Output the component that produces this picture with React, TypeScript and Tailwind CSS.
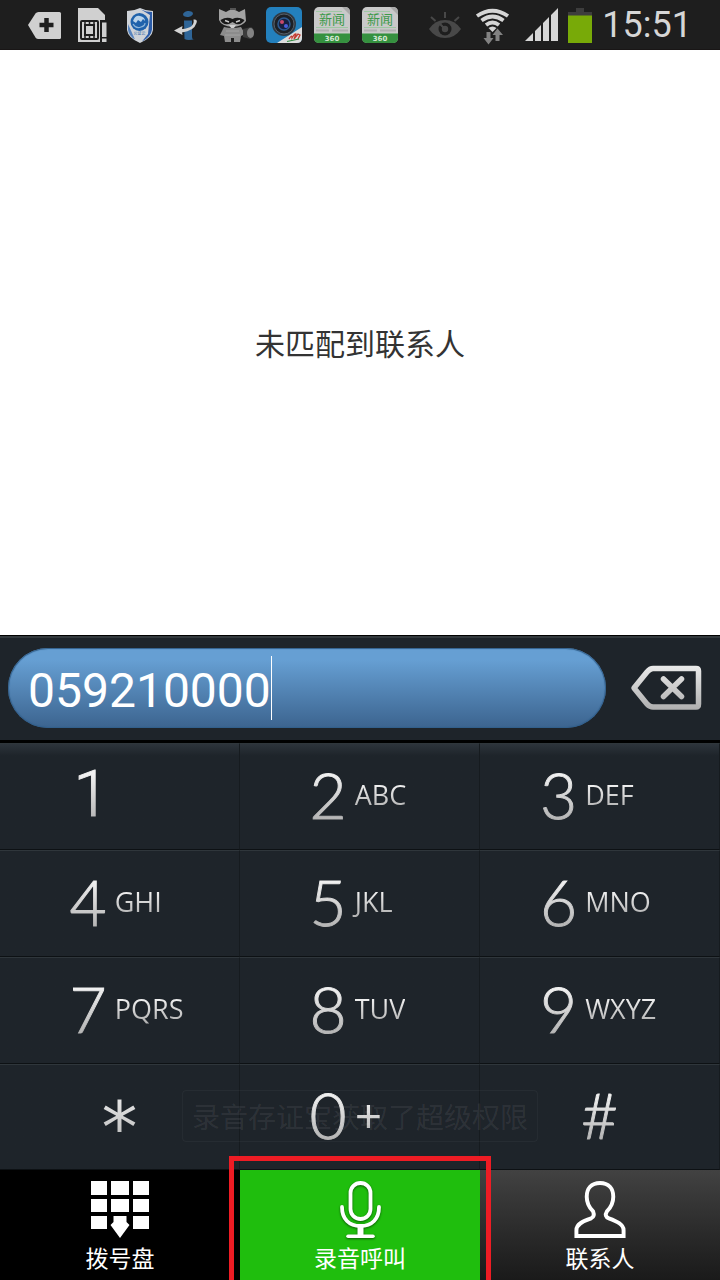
import type { FC, ReactNode } from 'react'
import { useState } from 'react'
import clsx from 'clsx'

interface DialKey {
  digit: string
  letters?: string
}

const KEYS: DialKey[] = [
  { digit: '1' },
  { digit: '2', letters: 'ABC' },
  { digit: '3', letters: 'DEF' },
  { digit: '4', letters: 'GHI' },
  { digit: '5', letters: 'JKL' },
  { digit: '6', letters: 'MNO' },
  { digit: '7', letters: 'PQRS' },
  { digit: '8', letters: 'TUV' },
  { digit: '9', letters: 'WXYZ' },
  { digit: '*' },
  { digit: '0', letters: '+' },
  { digit: '#' },
]

const NotifyIcon: FC<{ children: ReactNode }> = ({ children }) => (
  <svg className="w-12 h-[50px] shrink-0" viewBox="0 0 48 50" fill="none" aria-hidden="true">
    {children}
  </svg>
)

const NewsIcon: FC = () => (
  <NotifyIcon>
    <rect x="6" y="7" width="36" height="36" rx="5" fill="#c9c9c9" />
    <path d="M8 11.500H34M8 27.500H40" stroke="#9fc7a4" strokeWidth="1" />
    <path d="M34 7h3q5 0 5 5v3z" fill="#aaa" />
    <path d="M8 30.500H21M24 30.500H40" stroke="#b0b0b0" strokeWidth="2" />
    <path d="M6 33.500H42V38q0 5-5 5H11q-5 0-5-5z" fill="#35913f" />
    <text x="24" y="24" textAnchor="middle" fontSize="13" fill="#3c9a4a" fontFamily="'Noto Sans CJK SC', sans-serif">新闻</text>
    <text x="24" y="41" textAnchor="middle" fontSize="7" fontWeight="700" fill="#d5e8d6" fontFamily="'DejaVu Sans', sans-serif">360</text>
  </NotifyIcon>
)

const StatusBar: FC = () => (
  <header className="flex items-center h-[50px] pl-5 pr-7 bg-[#1e1e1e] border-b border-[#191616] overflow-hidden">
    <NotifyIcon>
      <path d="M8 25 15.500 13.500Q16.500 12 18.500 12H39.500Q41 12 41 13.500V37.500Q41 39 39.500 39H18.500Q16.500 39 15.500 37.500Z" fill="#d0d0d0" />
      <path d="M26.500 18V32M19.500 25H33.500" stroke="#1e1e1e" strokeWidth="4.500" />
    </NotifyIcon>
    <NotifyIcon>
      <path d="M10 8H30L37 15V42H10Z" fill="#d0d0d0" />
      <path d="M32 20H40V43H32Z" fill="#1e1e1e" />
      <path d="M34 22.500H38.500V37H34ZM34 38.500H38.500V42H34Z" fill="#d0d0d0" />
      <rect x="13" y="21" width="17" height="18" rx="1" stroke="#1e1e1e" strokeWidth="2" />
      <rect x="17" y="25" width="9" height="10" stroke="#1e1e1e" strokeWidth="2" />
      <path d="M17 21V25M21.500 21V25M26 21V25M17 35V39M21.500 35V39M26 35V39" stroke="#1e1e1e" strokeWidth="1.500" />
    </NotifyIcon>
    <NotifyIcon>
      <path d="M24 8Q30 11 37 11V30Q36 38 24 43Q12 38 11 30V11Q18 11 24 8Z" fill="#cfd3d8" />
      <path d="M25 9.500Q30 12 36 12V29.500Q35 37 26 41.500L32 34 34 15Z" fill="#2b5ca8" />
      <path d="M12 24V30Q13 36 19 39.500Z" fill="#5783bd" />
      <circle cx="23.500" cy="22" r="9" fill="#1f62ab" />
      <path d="M17 21q2-6 7-5 5 1 5 5l-2-2-2 3-3-2-2 3z" fill="#b9d3ea" />
      <path d="M17 24q3 5 8 3 4-1 4-4" stroke="#8fb6da" strokeWidth="1.200" />
      <text x="23.500" y="35" textAnchor="middle" fontSize="4" fill="#245ea6" fontFamily="'Noto Sans CJK SC', sans-serif">公证云</text>
    </NotifyIcon>
    <NotifyIcon>
      <ellipse cx="24" cy="14" rx="5" ry="3" fill="#2f6597" transform="rotate(-8 24 14)" />
      <path d="M20 20.500H28V37Q28 40 31 39Q24 41 20.500 39Z" fill="#2f6597" />
      <path d="M10 30.500 18.500 26 18 29Q31 28 29.500 19.500 34 19 32.500 23 30 31 18 32.500L18.500 35Z" fill="#d4d4d4" />
    </NotifyIcon>
    <NotifyIcon>
      <path d="M7 9 14 12Q20 7 27 12L33 9 34 21Q31 26 21 27 9 26 7 20Z" fill="#a2a2a2" />
      <path d="M8.500 20Q15 16 20.500 19 26 16 32.500 20 30 25 24 24L20.500 22 17 24Q10 25 8.500 20Z" fill="#191919" />
      <path d="M13 20.500 17 22M28 20.500 24 22" stroke="#ccc" strokeWidth="1.400" />
      <path d="M17 25H24L22 28H19Z" fill="#cfcfcf" />
      <path d="M12 27Q20 29 29 27L33 34 29 36 28 42H22V38H19V42H13L12 36 8 35Z" fill="#8c8c8c" />
      <path d="M14 31H27M13 35H28" stroke="#aaa" strokeWidth=".8" />
      <path d="M31 29 39 27Q42 28 42 33 42 38 38 39L31 37Z" fill="#3c3c3c" />
      <ellipse cx="38.500" cy="33" rx="3.500" ry="5" fill="#828282" />
      <path d="M18 9h6" stroke="#555" strokeWidth="2" />
    </NotifyIcon>
    <NotifyIcon>
      <rect x="6" y="7" width="36" height="36" rx="5" fill="#2380bd" />
      <path d="M17 43 42 27V38Q42 43 37 43Z" fill="#ddd" />
      <circle cx="24" cy="24" r="12" fill="#303a44" />
      <circle cx="24" cy="24" r="10" fill="#1c2026" stroke="#555f69" strokeWidth="1" />
      <circle cx="24" cy="24" r="6" fill="#172042" stroke="#2d5a91" strokeWidth="1.500" />
      <circle cx="22" cy="22" r="2" fill="#c8496c" />
      <circle cx="26" cy="26" r="2" fill="#4860df" />
      <path d="M29 39q3-5 3-1 3-5 4-4l-2 5 4-5 2 1-2 4" stroke="#c43b31" strokeWidth="1.300" />
      <path d="M27 41.500 39 39" stroke="#328c42" strokeWidth="1.200" />
    </NotifyIcon>
    <NewsIcon />
    <NewsIcon />
    <div className="flex items-center ml-auto">
      <svg className="w-8 h-[50px] mr-[14px]" viewBox="0 0 32 50" fill="none" aria-hidden="true">
        <path d="M0 29Q6 20 16 20T32 29Q26 38 16 38T0 29Z" fill="#484848" />
        <circle cx="16" cy="29" r="6.500" fill="#1e1e1e" />
        <circle cx="16" cy="29" r="3.200" fill="#484848" />
        <path d="M16 29 11 24M16 12V18M2 17 6.500 21M30 17 25.500 21" stroke="#484848" strokeWidth="2" />
      </svg>
      <svg className="w-9 h-[50px] mr-[14px]" viewBox="0 0 36 50" fill="none" aria-hidden="true">
        <path d="M2 16Q17.500 5.500 33 16M6.500 20.500Q17.500 12.500 28.500 20.500M11 25Q17.500 20 24 25" stroke="#d6d6d6" strokeWidth="3.800" />
        <path d="M13.500 28Q17.500 25 21.500 28L17.500 32Z" fill="#d6d6d6" />
        <path d="M11.500 32H15.500V38H18.500L13.500 44.500 8.500 38H11.500Z" fill="#828282" />
        <path d="M22.500 28.500 28 35H24.500V41H20.500V35H17.500Z" fill="#828282" />
      </svg>
      <svg className="w-[33px] h-[50px] mr-[10px]" viewBox="0 0 33 50" fill="#d6d6d6" aria-hidden="true">
        <path d="M0 41 8 33V41ZM10 31 16 25V41H10ZM18 23 24 17V41H18ZM26 15 33 8V41H26Z" />
      </svg>
      <svg className="w-6 h-[50px] mr-[10px]" viewBox="0 0 24 50" aria-hidden="true">
        <path d="M8 8H16V12H24V16H0V12H8Z" fill="#3d3d3d" />
        <path d="M0 15.500H24V43H0Z" fill="#78aa08" />
      </svg>
      <time className="font-['Roboto',sans-serif] text-4xl leading-[50px] text-[#d6d6d6]">15:51</time>
    </div>
  </header>
)

const DeleteIcon: FC = () => (
  <svg className="w-[72px] h-[46px]" viewBox="0 0 72 46" fill="none" aria-hidden="true">
    <defs>
      <linearGradient id="metal" gradientUnits="userSpaceOnUse" x1="0" y1="0" x2="0" y2="46">
        <stop stopColor="#ebebeb" />
        <stop offset="1" stopColor="#adadad" />
      </linearGradient>
    </defs>
    <g stroke="url(#metal)" strokeWidth="5.500" strokeLinecap="round" strokeLinejoin="round">
      <path d="M4 23 17 7Q20 3.500 23 3.500H66Q68.500 3.500 68.500 6V39Q68.500 42 66 42H23Q20 42 17 39Z" />
      <path d="M33.500 14 51.500 31.500M51.500 14 33.500 31.500" />
    </g>
  </svg>
)

const KeypadIcon: FC = () => (
  <svg className="w-[58px] h-[57px]" viewBox="0 0 58 57" fill="#fff" aria-hidden="true">
    <path d="M0 0H16V14H0ZM20 0H38V14H20ZM42 0H58V14H42ZM0 18H16V31H0ZM20 18H38V31H20ZM42 18H58V31H42ZM0 35H16V48H0ZM42 35H58V48H42Z" />
    <path d="M22.500 35H35.500V41L38.500 44 29 57 19.500 44 22.500 41Z" />
  </svg>
)

const MicIcon: FC = () => (
  <svg className="w-[41px] h-[57px] drop-shadow-[0_1px_1px_#0a5a04]" viewBox="0 0 41 57" fill="none" stroke="#fff" strokeWidth="3.800" aria-hidden="true">
    <rect x="10.500" y="2" width="20" height="36" rx="10" />
    <path d="M2 26C2 38 9 45 20.500 45S39 38 39 26" strokeLinecap="round" />
    <path d="M20.500 45V55" strokeWidth="6" />
    <path d="M8 55.200H33" strokeWidth="3.500" strokeLinecap="round" />
  </svg>
)

const PersonIcon: FC = () => (
  <svg className="w-[52px] h-[57px]" viewBox="0 0 52 58" fill="none" stroke="#fff" strokeWidth="4" aria-hidden="true">
    <path d="M26 2C17 2 12.500 8 12.500 16 12.500 24 16 28 19 31Q21 36 17 38C8 41 2 44 2 50V56H50V50C50 44 43 41 35 38Q30 36 33 31C36 28 39.500 24 39.500 16 39.500 8 35 2 26 2Z" />
  </svg>
)

interface KeyProps extends DialKey {
  column: number
  onPress: (digit: string) => void
}

const KeyButton: FC<KeyProps> = ({ digit, letters, column, onPress }) => {
  const isSymbol = digit === '*' || digit === '#'
  const metal = 'bg-linear-to-b from-[#f2f2f2] from-20% to-[#b4b4b4] to-85% bg-clip-text text-transparent'

  return (
    <button
      type="button"
      onClick={() => onPress(digit)}
      className={clsx(
        'flex items-center gap-1 pb-1 border-t border-t-[#2f363b] border-b border-b-[#0d1114] border-r border-r-[#161b1f]',
        isSymbol ? 'justify-center' : column === 2 ? 'pl-[25%]' : 'pl-[29%]',
      )}
    >
      <span
        className={clsx(
          metal,
          digit === '*' && "font-['DejaVu_Sans',sans-serif] text-[72px] leading-[72px] pt-6",
          digit === '1' && "font-['Roboto',sans-serif] font-light text-[64px] leading-[72px] pl-1 [-webkit-text-stroke:1px_transparent]",
          digit !== '*' && digit !== '1' && "font-['Lato',sans-serif] font-light text-[64px] leading-[72px] [-webkit-text-stroke:1px_transparent]",
        )}
      >
        {digit}
      </span>
      {letters && (
        <span
          className={clsx(
            metal,
            "pl-1 font-['Open_Sans','Noto_Sans',sans-serif]",
            letters === '+' ? 'text-5xl leading-[52px]' : 'text-[27px] leading-9',
          )}
        >
          {letters}
        </span>
      )}
    </button>
  )
}

export default function App() {
  const [number, setNumber] = useState('059210000')

  return (
    <div className="flex flex-col min-h-screen bg-white font-['Roboto','Noto_Sans_CJK_SC',sans-serif]">
      <StatusBar />

      <main className="flex flex-1 items-center justify-center pt-1">
        <p className="text-[30px] leading-10 text-[#333]">未匹配到联系人</p>
      </main>

      <section className="bg-[#1e242a]">
        <div className="flex items-center gap-6 h-[108px] pl-2 pr-[18px] border-t border-t-black border-b-3 border-b-black shadow-[inset_0_2px_0_#33393d]">
          <label className="flex flex-1 min-w-0 items-center h-20 pl-5 rounded-full bg-linear-to-b from-[#669fd3] from-15% to-[#3c648f] shadow-[inset_0_0_1px_1px_#315f8b]">
            <input
              type="tel"
              aria-label="电话号码"
              value={number}
              onChange={(e) => setNumber(e.target.value)}
              className="[field-sizing:content] max-w-full pt-1.5 bg-transparent outline-none text-5xl leading-[64px] text-white caret-transparent"
            />
            <span className="w-px h-16 bg-white" />
          </label>
          <button type="button" aria-label="删除" onClick={() => setNumber(number.slice(0, -1))}>
            <DeleteIcon />
          </button>
        </div>

        <div className="relative grid grid-cols-3 grid-rows-[107px_107px_107px_106px] bg-linear-to-b from-[#2e353d] to-[#1e242a] to-3%">
          {KEYS.map((key, i) => (
            <KeyButton key={key.digit} {...key} column={i % 3} onPress={(d) => setNumber(number + d)} />
          ))}
          <div
            role="status"
            className="absolute left-1/2 bottom-7 -translate-x-1/2 px-[9px] pt-1.5 rounded border border-white/4 text-[28px] leading-11 whitespace-nowrap text-white/8 pointer-events-none"
          >
            录音存证宝获取了超级权限
          </div>
        </div>
      </section>

      <nav className="grid grid-cols-3 h-[110px] text-[23px] leading-7 text-white">
        <button type="button" className="flex flex-col items-center gap-2 pt-[11px] bg-black">
          <KeypadIcon />
          拨号盘
        </button>
        <button type="button" className="relative flex flex-col items-center gap-2 pt-[11px] bg-[#1fbe0d]">
          <MicIcon />
          录音呼叫
          <span className="absolute -top-[14px] bottom-0 -inset-x-[11px] z-10 border-5 border-b-0 border-[#ee1c24]" />
        </button>
        <button type="button" className="flex flex-col items-center gap-2 pt-[11px] bg-linear-to-b from-[#424242] to-[#1a1a1a]">
          <PersonIcon />
          联系人
        </button>
      </nav>
    </div>
  )
}
